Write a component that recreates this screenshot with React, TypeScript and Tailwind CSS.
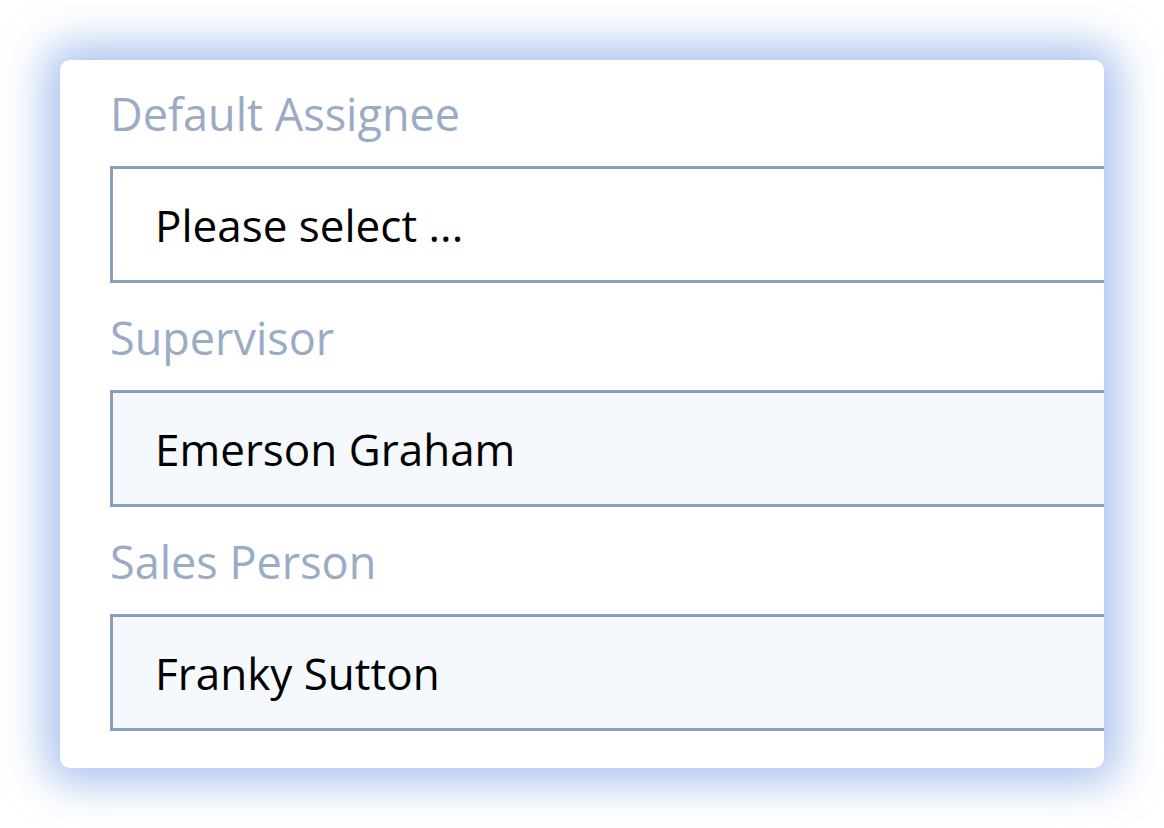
const FIELDS = [
  { label: 'Default Assignee', value: 'Please select ...', filled: false },
  { label: 'Supervisor', value: 'Emerson Graham', filled: true },
  { label: 'Sales Person', value: 'Franky Sutton', filled: true },
]

export default function App() {
  return (
    <div className="h-[828px] w-[1164px] bg-white pl-[60px] pt-[60px] font-['Open_Sans',sans-serif]">
      <div className="h-[708px] w-[1044px] overflow-hidden rounded-[10px] bg-white pl-[50px] shadow-[0_0_44px_14px_rgba(110,150,225,0.6)]">
        {FIELDS.map((f) => (
          <div key={f.label} className="mb-px">
            <div className="h-[106px] pt-[26px] text-[45px] leading-[56px] text-[#9aabc6]">{f.label}</div>
            <div
              className={`flex h-[117px] w-[1100px] items-center border-[3px] border-[#8a9fbd] pl-[42px] text-[44px] text-black ${
                f.filled ? 'bg-[#f5f9fd]' : 'bg-white'
              }`}
            >
              {f.value}
            </div>
          </div>
        ))}
      </div>
    </div>
  )
}
